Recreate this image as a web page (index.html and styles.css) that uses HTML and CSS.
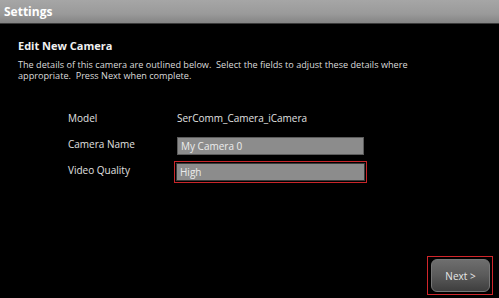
FILE: index.html
```html
<!DOCTYPE html>
<html lang="en">
<head>
  <meta charset="UTF-8" />
  <meta name="viewport" content="width=device-width, initial-scale=1.0"/>
  <title>Settings</title>
  <link rel="stylesheet" href="styles.css">
</head>
<body>

  <div class="title-bar">Settings</div>

  <div class="content">
    <h2>Edit New Camera</h2>
    <p class="intro">The details of this camera are outlined below.&nbsp; Select the fields to adjust these details where appropriate.&nbsp; Press Next when complete.</p>

    <div class="form">
      <div class="label">Model</div>
      <div class="value">SerComm_Camera_iCamera</div>

      <div class="label">Camera Name</div>
      <div class="field"><span class="box">My Camera 0</span></div>

      <div class="label">Video Quality</div>
      <div class="field focused"><span class="box">High</span></div>
    </div>
  </div>

  <div class="footer">
    <div class="next-wrap">
      <button class="next">Next &gt;</button>
    </div>
  </div>

</body>
</html>
```

FILE: styles.css
```css
body {
  font-family: 'Open Sans', 'Noto Sans', sans-serif;
  background: #000;
  color: #e6e6e6;
  margin: 0;
  padding: 0;
  width: 499px;
  height: 298px;
  overflow: hidden;
  display: flex;
  flex-direction: column;
}

.title-bar {
  height: 23px;
  line-height: 23px;
  padding-left: 4px;
  background: linear-gradient(#a6a6a6, #9a9a9a 60%, #848484);
  border-bottom: 1px solid #3a3a3a;
  color: #fff;
  font-weight: bold;
  font-size: 12px;
}

.content {
  padding: 0 18px;
  flex: 1;
}

h2 {
  margin: 14px 0 0;
  font-size: 11px;
  font-weight: bold;
  color: #f0f0f0;
}

.intro {
  margin: 6px 0 0;
  font-size: 9.15px;
  line-height: 11px;
  color: #dcdcdc;
  width: 410px;
}

.form {
  display: grid;
  grid-template-columns: 106px 193px;
  grid-auto-rows: 25px;
  row-gap: 1px;
  margin: 25px 0 0 50px;
  font-size: 10px;
}

.label,
.value {
  line-height: 25px;
  color: #e0e0e0;
}

.value {
  padding-left: 3px;
}

.field {
  align-self: end;
  height: 22px;
  padding: 1px 2px;
  box-sizing: border-box;
  border: 1px solid transparent;
}

.field .box {
  display: block;
  height: 16px;
  line-height: 16px;
  padding-left: 3px;
  background: #8c8c8c;
  border: 1px solid #5c5c5c;
  color: #ececec;
}

.field.focused {
  border: 1px solid #c8262a;
  padding: 1px;
}

.field.focused .box {
  border-color: #3a3a3a;
}

.footer {
  display: flex;
  justify-content: flex-end;
  padding: 0 6px 3px 0;
}

.next-wrap {
  border: 1px solid #d1262b;
  padding: 2px 2px 2px 3px;
}

.next {
  width: 59px;
  height: 33px;
  border: 1px solid #777;
  border-radius: 6px;
  background: linear-gradient(#6e6e6e, #5a5a5a 50%, #3e3e3e);
  color: #e8e8e8;
  font-family: 'Open Sans', 'Noto Sans', sans-serif;
  font-size: 10px;
  display: block;
}
```
